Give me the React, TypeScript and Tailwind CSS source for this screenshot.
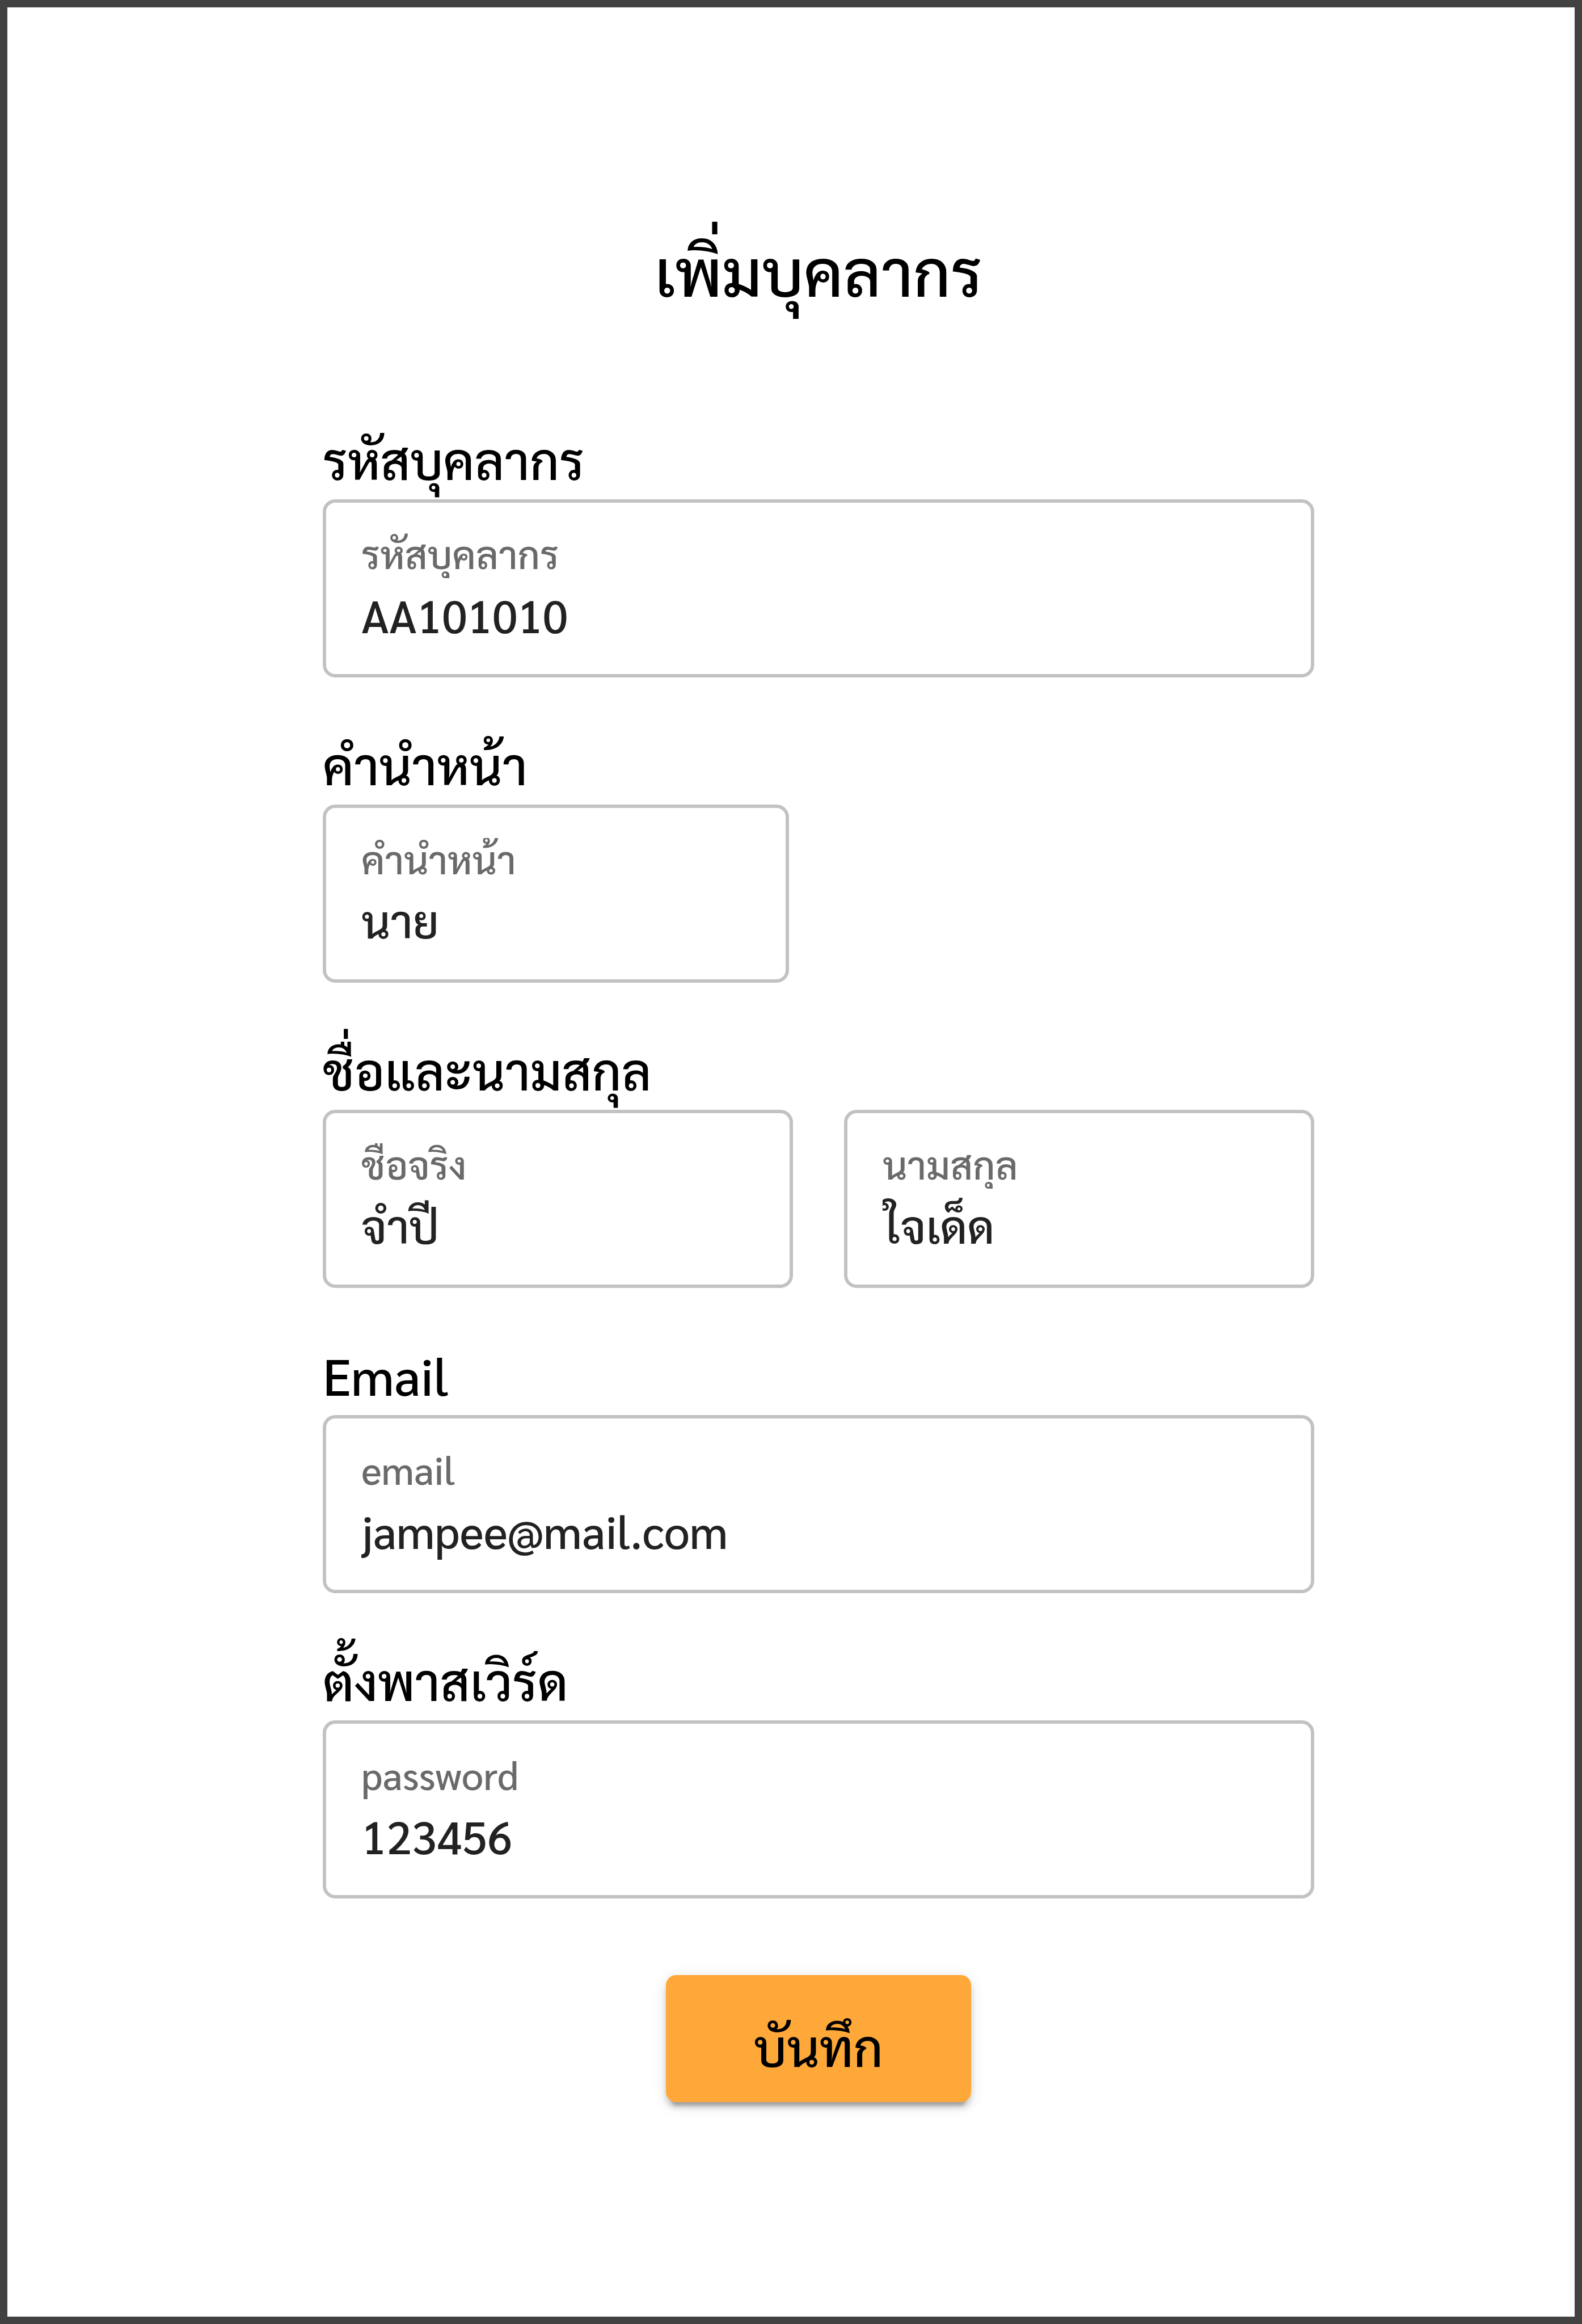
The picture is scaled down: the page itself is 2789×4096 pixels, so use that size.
import { useId } from "react";

type BoxProps = { caption: string; value: string; id?: string };

function OutlinedInput({ caption, value, id }: BoxProps) {
  const own = useId();
  const inputId = id ?? own;
  return (
    <div className="flex h-[314px] flex-col rounded-[22px] border-6 border-[#c2c2c2] px-[62px] pt-[53px]">
      <label
        htmlFor={inputId}
        className="mb-4 shrink-0 overflow-hidden pb-2 text-[68px] leading-[72px] font-medium whitespace-nowrap text-[#6a6a6a]"
      >
        {caption}
      </label>
      <input
        id={inputId}
        type="text"
        defaultValue={value}
        className="h-[112px] w-full bg-transparent pb-4 text-[80px] leading-[96px] font-medium text-[#222222] outline-none"
      />
    </div>
  );
}

const heading = "mb-[22px] block text-[90px] leading-[98px] font-medium text-black";

function Field({ title, caption, value, narrow }: BoxProps & { title: string; narrow?: boolean }) {
  const id = useId();
  return (
    <div className={narrow ? "w-[47%]" : "w-full"}>
      <label htmlFor={id} className={heading}>
        {title}
      </label>
      <OutlinedInput id={id} caption={caption} value={value} />
    </div>
  );
}

export default function App() {
  return (
    <main className="min-h-screen border-[13px] border-[#424242] bg-white pt-[382px] pr-[459px] pl-[556px] font-['Sarabun','Noto_Sans_CJK_SC','Noto_Sans_Thai_Looped',sans-serif]">
      <form className="flex flex-col" onSubmit={(e) => e.preventDefault()}>
        <h1 className="mb-[205px] text-center text-[114px] leading-[160px] font-medium text-black">เพิ่มบุคลากร</h1>
        <div className="flex flex-col gap-[104px]">
          <Field title="รหัสบุคลากร" caption="รหัสบุคลากร" value="AA101010" />
          <Field title="คำนำหน้า" caption="คำนำหน้า" value="นาย" narrow />
          <fieldset>
            <legend className={heading}>ชื่อและนามสกุล</legend>
            <div className="grid grid-cols-2 gap-[90px]">
              <OutlinedInput caption="ชื่อจริง" value="จำปี" />
              <OutlinedInput caption="นามสกุล" value="ใจเด็ด" />
            </div>
          </fieldset>
          <Field title="Email" caption="email" value="jampee@mail.com" />
          <Field title="ตั้งพาสเวิร์ด" caption="password" value="123456" />
        </div>
        <button
          type="submit"
          className="mt-[135px] h-[224px] self-center rounded-[18px] bg-[#fea83a] px-[155px] pt-[26px] text-[90px] leading-[120px] font-medium text-black shadow-[0_16px_5px_-10px_rgba(0,0,0,0.2),0_10px_10px_rgba(0,0,0,0.14),0_5px_26px_rgba(0,0,0,0.12)]"
        >
          บันทึก
        </button>
      </form>
    </main>
  );
}
